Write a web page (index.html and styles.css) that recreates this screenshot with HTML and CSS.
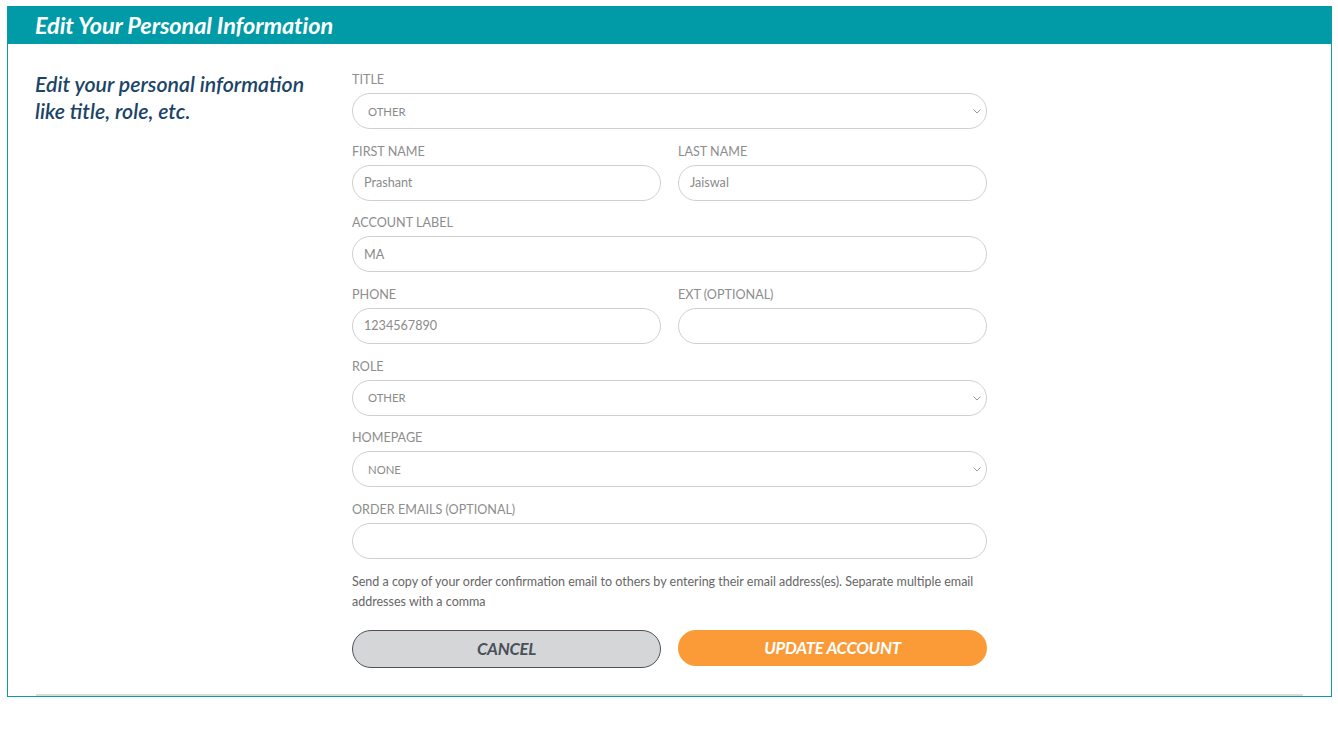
FILE: index.html
```html
<!DOCTYPE html>
<html lang="en">
<head>
<meta charset="utf-8">
<title>Edit Your Personal Information</title>
<link rel="stylesheet" href="styles.css">
</head>
<body>
<section class="panel">
  <h1 class="panel-title">Edit Your Personal Information</h1>
  <div class="panel-body">
    <div class="content">
      <p class="intro">Edit your personal information like title, role, etc.</p>
      <form class="form">
        <div class="field">
          <label class="label">TITLE</label>
          <div class="select"><span>OTHER</span><svg class="chev" viewBox="0 0 8 5" width="8" height="5"><path d="M0.5 0.5 L4 4 L7.5 0.5" fill="none" stroke="#999" stroke-width="1"/></svg></div>
        </div>
        <div class="row">
          <div class="field">
            <label class="label">FIRST NAME</label>
            <div class="input">Prashant</div>
          </div>
          <div class="field">
            <label class="label">LAST NAME</label>
            <div class="input">Jaiswal</div>
          </div>
        </div>
        <div class="field">
          <label class="label">ACCOUNT LABEL</label>
          <div class="input">MA</div>
        </div>
        <div class="row">
          <div class="field">
            <label class="label">PHONE</label>
            <div class="input">1234567890</div>
          </div>
          <div class="field">
            <label class="label">EXT (OPTIONAL)</label>
            <div class="input"></div>
          </div>
        </div>
        <div class="field">
          <label class="label">ROLE</label>
          <div class="select"><span>OTHER</span><svg class="chev" viewBox="0 0 8 5" width="8" height="5"><path d="M0.5 0.5 L4 4 L7.5 0.5" fill="none" stroke="#999" stroke-width="1"/></svg></div>
        </div>
        <div class="field">
          <label class="label">HOMEPAGE</label>
          <div class="select"><span>NONE</span><svg class="chev" viewBox="0 0 8 5" width="8" height="5"><path d="M0.5 0.5 L4 4 L7.5 0.5" fill="none" stroke="#999" stroke-width="1"/></svg></div>
        </div>
        <div class="field last">
          <label class="label">ORDER EMAILS (OPTIONAL)</label>
          <div class="input"></div>
        </div>
        <p class="help">Send a copy of your order confirmation email to others by entering their email address(es). Separate multiple email addresses with a comma</p>
        <div class="row buttons">
          <button type="button" class="btn btn-cancel">CANCEL</button>
          <button type="button" class="btn btn-update">UPDATE ACCOUNT</button>
        </div>
      </form>
    </div>
    <div class="rule"></div>
  </div>
</section>
</body>
</html>
```

FILE: styles.css
```css
* { box-sizing: border-box; }
html, body { margin: 0; padding: 0; background: #fff; }
body { font-family: Lato, "Open Sans", Arial, sans-serif; }

.panel {
  margin: 6px 6px 0 7px;
  width: 1325px;
  border: 1px solid #0a9ba6;
  border-top: none;
}
.panel-title {
  margin: 0;
  height: 38px;
  background: #009ba6;
  color: #fff;
  font-size: 23.5px;
  font-weight: 700;
  font-style: italic;
  line-height: 38px;
  padding-left: 27px;
  letter-spacing: -0.1px;
}
.panel-body {
  padding: 0 28px 0 27px;
}
.content {
  display: flex;
  padding-top: 27px;
  padding-bottom: 26px;
}
.intro {
  width: 317px;
  flex: none;
  margin: 0;
  font-size: 21.3px;
  line-height: 27px;
  font-style: italic;
  font-weight: 600;
  color: #1b4568;
  padding-right: 30px;
}
.form {
  width: 635px;
  display: flex;
  flex-direction: column;
}
.row {
  display: grid;
  grid-template-columns: 1fr 1fr;
  column-gap: 17px;
}
.field {
  display: flex;
  flex-direction: column;
  margin-bottom: 13.67px;
}
.field.last { margin-bottom: 13px; }
.label {
  font-size: 12.6px;
  line-height: 16px;
  color: #8d8d8d;
  padding-top: 1px;
  margin-bottom: 5px;
}
.input, .select {
  height: 36px;
  border: 1px solid #cfcfcf;
  border-radius: 18px;
  font-size: 12.6px;
  color: #8a8a8a;
  display: flex;
  align-items: center;
  padding: 0 11px;
  background: #fff;
}
.select {
  justify-content: space-between;
  padding: 0 5px 0 15px;
  font-size: 11.3px;
}
.chev { margin-top: 1px; }
.help {
  margin: 0 0 18px;
  font-size: 12.5px;
  line-height: 20px;
  color: #666;
}
.buttons { align-items: start; }
.btn {
  font-family: Lato, "Open Sans", Arial, sans-serif;
  font-size: 16.8px;
  font-weight: 700;
  font-style: italic;
  border-radius: 19px;
  cursor: pointer;
  letter-spacing: -0.3px;
}
.btn-cancel {
  height: 38px;
  background: #d5d6d8;
  border: 1px solid #4d5259;
  color: #4a5059;
}
.btn-update {
  height: 36px;
  background: #fb9b37;
  border: none;
  color: #fff;
}
.rule {
  height: 2px;
  background: #dcdcdc;
  margin-left: 1px;
}
```
